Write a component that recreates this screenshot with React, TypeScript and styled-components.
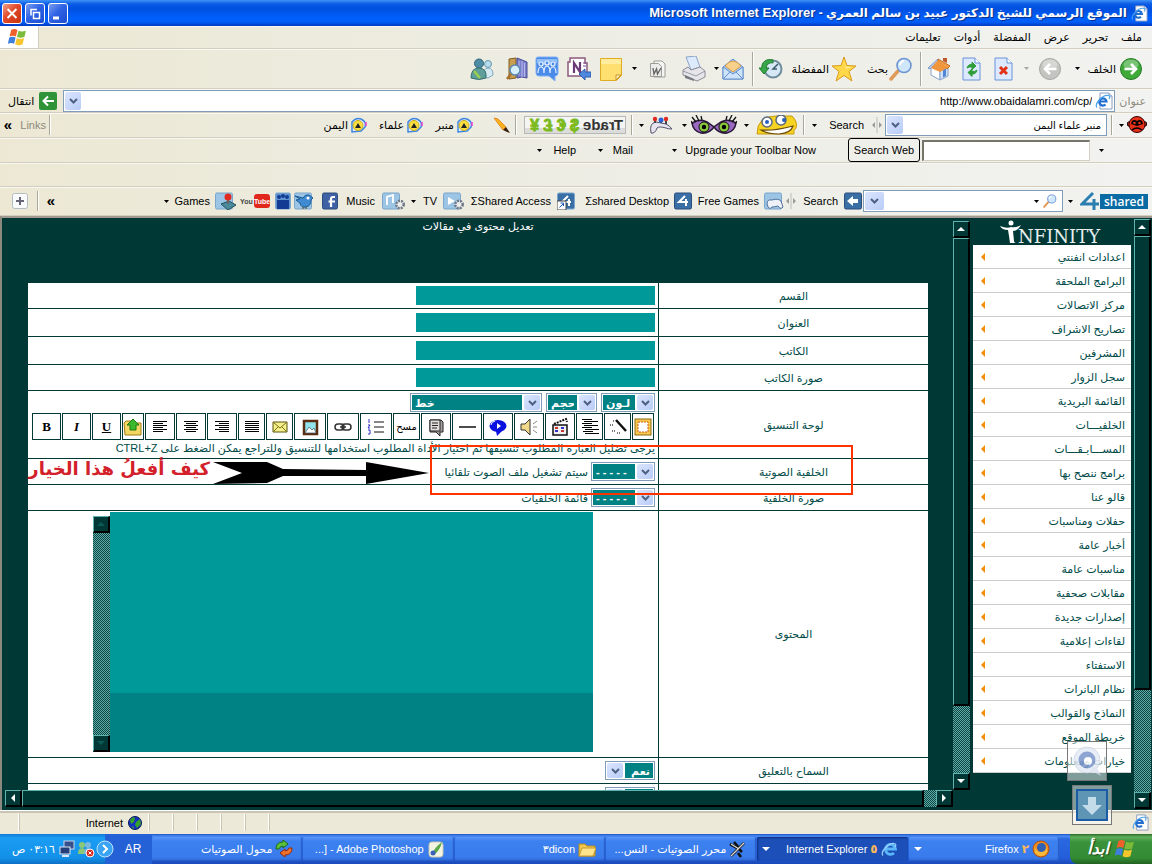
import React from 'react';
import styled, { createGlobalStyle } from 'styled-components';

const dark = '#003836';
const edge = '#5fb3ae';
const ink = '#004a48';

const GlobalStyle = createGlobalStyle`
  * { box-sizing: border-box; }
  body { margin: 0; }
  button, input, select, textarea { font: inherit; margin: 0; padding: 0; border: 0; border-radius: 0; color: inherit; }
  button { background: none; cursor: pointer; }
`;

/* ---------- window chrome ---------- */

const Desktop = styled.div`
  display: flex;
  flex-direction: column;
  height: 100vh;
  overflow: hidden;
  direction: rtl;
  background: #ece9d8;
  color: #000;
  font: 11px/14px "Liberation Sans", "DejaVu Sans", sans-serif;
`;

const TitleBar = styled.header`
  display: flex;
  align-items: center;
  flex: none;
  height: 26px;
  padding: 0 4px 0 2px;
  gap: 4px;
  background: linear-gradient(#3f92f8 0, #0a5be6 4px, #0050e0 9px, #0060fc 18px, #005ef8 22px, #0038c0 26px);
  color: #fff;
`;

const WindowTitle = styled.h1`
  flex: 1;
  margin: 0;
  font-size: 12px;
  line-height: 18px;
  font-weight: bold;
  white-space: nowrap;
  text-shadow: 1px 1px 1px #0a2f86;
`;

const AppName = styled.span`
  font-size: 13px;
`;

const WindowButtons = styled.div`
  display: flex;
  gap: 3px;
`;

const WindowButton = styled.button<{ $close?: boolean }>`
  width: 20px;
  height: 21px;
  border: 1px solid #fff;
  border-radius: 3px;
  background: ${p => (p.$close ? 'linear-gradient(135deg, #f0a088, #e0492a 45%, #c8330f)' : 'linear-gradient(135deg, #7d9ff0, #2f63e4 45%, #1a4cd0)')};
  svg { display: block; }
`;

const Band = styled.div<{ $h: number; $pad: number }>`
  display: flex;
  align-items: center;
  flex: none;
  height: ${p => p.$h}px;
  padding-right: ${p => p.$pad}px;
  border-bottom: 1px solid #d2cfc0;
  box-shadow: inset 0 1px 0 #f8f7f2;
  background: linear-gradient(90deg, #ece8d4, #edede4 50%, #f2f2f0);
  white-space: nowrap;
`;

const Menu = styled.nav`
  display: flex;
  gap: 13px;
`;

const MenuItem = styled.button`
  font-size: 11px;
`;

const Brand = styled.div`
  display: flex;
  align-items: center;
  justify-content: center;
  width: 39px;
  height: 22px;
  margin-right: auto;
  padding-right: 4px;
  background: #fff;
  border-right: 1px solid #d2cfc0;
`;

const Tool = styled.button<{ $w: number; $ms?: number }>`
  flex: none;
  width: ${p => p.$w}px;
  margin-right: ${p => p.$ms ?? 0}px;
  text-align: right;
  white-space: nowrap;
  svg { display: block; }
`;

const Rule = styled.span<{ $ms?: number; $h?: number }>`
  flex: none;
  width: 2px;
  height: ${p => p.$h ?? 20}px;
  margin-right: ${p => p.$ms ?? 0}px;
  border-left: 1px solid #a8a799;
  border-right: 1px solid #fff;
`;

const CaretSlot = styled.span<{ $ms?: number; $faint?: boolean }>`
  flex: none;
  width: 7px;
  margin-right: ${p => p.$ms ?? 0}px;
  opacity: ${p => (p.$faint ? 0.3 : 1)};
  svg { display: block; margin: 0 auto; }
`;

const Spring = styled.span`
  flex: 1;
`;

const Muted = styled.span<{ $size?: number }>`
  color: #8d8a7c;
  font-size: ${p => p.$size ?? 11}px;
`;

const Chevrons = styled.span`
  display: block;
  direction: ltr;
  text-align: center;
  font-size: 15px;
  font-weight: bold;
  line-height: 12px;
`;

const Combo = styled.div<{ $w?: number; $ms?: number; $h?: number }>`
  display: flex;
  align-items: center;
  flex: ${p => (p.$w ? 'none' : '1')};
  width: ${p => (p.$w ? p.$w + 'px' : 'auto')};
  height: ${p => p.$h ?? 22}px;
  margin-right: ${p => p.$ms ?? 0}px;
  padding: 1px;
  gap: 3px;
  border: 1px solid #7f9db9;
  background: #fff;
`;

const ComboInput = styled.input<{ $ltr?: boolean }>`
  flex: 1;
  min-width: 0;
  height: 100%;
  padding: 0 ${p => (p.$ltr ? 0 : 4)}px;
  background: transparent;
  outline: 0;
  direction: ${p => (p.$ltr ? 'ltr' : 'rtl')};
  text-align: right;
  font-size: ${p => (p.$ltr ? 11 : 10)}px;
`;

const DropButton = styled.button<{ $w: number }>`
  display: flex;
  align-items: center;
  justify-content: center;
  flex: none;
  width: ${p => p.$w}px;
  height: 100%;
  border-radius: 2px;
  background: linear-gradient(135deg, #dbe5fd, #b9ccf8);
`;

const GoButton = styled.button`
  display: flex;
  align-items: center;
  gap: 5px;
  margin: 0 6px 0 8px;
`;

const SunkenInput = styled.input`
  width: 168px;
  height: 21px;
  margin-right: 8px;
  border: 1px solid #d4d0c0;
  border-top: 2px solid #77756a;
  border-left: 2px solid #77756a;
  background: #fff;
`;

const SearchWeb = styled.button`
  width: 72px;
  height: 24px;
  margin-right: 2px;
  border: 1px solid #000;
  border-radius: 3px;
  text-align: center;
`;

/* ---------- page frames ---------- */

const Frames = styled.main`
  display: flex;
  flex: 1;
  min-height: 0;
  padding: 1px 1px 1px 0;
  gap: 3px;
  border-top: 2px solid #a09a92;
  border-left: 2px solid #8b8880;
  background: ${dark};
  color: ${ink};
`;

const VBar = styled.div<{ $top?: number }>`
  display: flex;
  flex-direction: column;
  flex: none;
  width: 17px;
  margin-top: ${p => p.$top ?? 0}px;
`;

const HBar = styled.div`
  display: flex;
  flex: none;
  height: 17px;
  padding: 0 17px 0 3px;
`;

const ScrollButton = styled.button`
  display: flex;
  align-items: center;
  justify-content: center;
  flex: none;
  width: 17px;
  height: 17px;
  border: 1px solid #000;
  border-top-color: ${edge};
  border-left-color: ${edge};
  border-right-width: 2px;
  border-bottom-width: 2px;
  background: ${dark};
`;

const Thumb = styled.div<{ $grow: number }>`
  flex: ${p => p.$grow} 1 0;
  border: 1px solid #000;
  border-top-color: ${edge};
  border-left-color: ${edge};
  border-right-width: 2px;
  border-bottom-width: 2px;
  background: ${dark};
`;

const Track = styled.div<{ $grow: number }>`
  flex: ${p => p.$grow} 1 0;
  background: repeating-conic-gradient(#5fa8a4 0 25%, #0b4745 0 50%) 0 0 / 2px 2px;
`;

const Sidebar = styled.aside`
  flex: none;
  width: 158px;
`;

const LogoLink = styled.a`
  display: flex;
  justify-content: center;
  height: 26px;
  svg { display: block; overflow: visible; }
`;

const SideList = styled.ul`
  margin: 0;
  padding: 0;
  list-style: none;
  background: #fff;
`;

const SideLink = styled.a`
  display: flex;
  align-items: center;
  justify-content: space-between;
  height: 24px;
  padding: 0 6px;
  border-bottom: 1px solid #ccc;
  color: ${ink};
  font-size: 11px;
  text-decoration: none;
`;

const MainFrame = styled.section`
  display: flex;
  flex: 1;
  min-width: 0;
  flex-direction: column;
  padding-bottom: 2px;
`;

const MainRow = styled.div`
  display: flex;
  flex: 1;
  min-height: 0;
`;

const Page = styled.div`
  flex: 1;
  min-width: 0;
  overflow: hidden;
  padding: 0 25px 0 26px;
`;

const PageTitle = styled.h2`
  height: 64px;
  margin: 0;
  color: #fff;
  text-align: center;
  font-size: 11px;
  font-weight: normal;
`;

const Sheet = styled.div`
  position: relative;
`;

const FormTable = styled.table`
  width: 100%;
  border-spacing: 0;
  background: #fff;
`;

const LabelCell = styled.th<{ $h: number }>`
  width: 270px;
  height: ${p => p.$h}px;
  padding: 0;
  border-left: 1px solid ${dark};
  border-bottom: 1px solid ${dark};
  font-size: 11px;
  font-weight: normal;
  text-align: center;
`;

const FieldCell = styled.td`
  padding: 0 3px;
  border-bottom: 1px solid ${dark};
  white-space: nowrap;
`;

const FieldInput = styled.input`
  display: block;
  width: 239px;
  height: 19px;
  background: #099;
`;

const Inline = styled.div`
  display: flex;
  align-items: center;
  gap: 3px;
`;

const SelectBox = styled.span<{ $w: number; $start?: boolean }>`
  display: flex;
  flex: none;
  flex-direction: ${p => (p.$start ? 'row' : 'row-reverse')};
  width: ${p => p.$w}px;
  height: 19px;
  padding: 1px;
  gap: 2px;
  border: 1px solid #7f9db9;
  background: #fff;
  direction: rtl;
`;

const Pickers = styled(Inline)`
  gap: 4px;
`;

const TealSelect = styled.select`
  flex: 1;
  min-width: 0;
  padding: 0 3px;
  appearance: none;
  border: 0;
  background: #008284;
  color: #fff;
  font-size: 11px;
  font-weight: bold;
  outline: 0;
`;

const EditorBar = styled.div`
  display: flex;
  direction: ltr;
  justify-content: flex-end;
  gap: 1px;
  margin-top: 1px;
  padding-right: 1px;
`;

const EditorButton = styled.button<{ $w: number }>`
  display: flex;
  align-items: center;
  justify-content: center;
  flex: none;
  width: ${p => p.$w}px;
  height: 27px;
  border: 1px solid ${dark};
  background: #fff;
  color: #000;
  font-size: 10px;
  overflow: hidden;
`;

const Letter = styled.span<{ $italic?: boolean; $under?: boolean }>`
  font: bold 13px/16px "Liberation Serif", serif;
  font-style: ${p => (p.$italic ? 'italic' : 'normal')};
  text-decoration: ${p => (p.$under ? 'underline' : 'none')};
`;

const Hint = styled.p`
  margin: 0;
  font-size: 11px;
  line-height: 16px;
`;

const EditorArea = styled.div`
  display: flex;
  align-items: flex-end;
  justify-content: center;
  height: 240px;
  margin-bottom: 4px;
`;

const Content = styled.textarea`
  width: 483px;
  height: 240px;
  resize: none;
  outline: 0;
  background: linear-gradient(#099 181px, #008284 181px);
`;

const EditorScroll = styled.div`
  display: flex;
  flex-direction: column;
  width: 17px;
  height: 236px;
`;

const Callout = styled.div`
  position: absolute;
  top: 162px;
  right: 75px;
  width: 423px;
  height: 50px;
  border: 2px solid #ff3300;
`;

const Annotation = styled.div`
  position: absolute;
  top: 178px;
  right: 499px;
  display: flex;
  align-items: flex-start;
  gap: 3px;
  direction: ltr;
  color: #d3202a;
  font: bold 18px/16px "DejaVu Sans", sans-serif;
  white-space: nowrap;
`;

const Gadget = styled.button<{ $top: number; $right: number }>`
  position: fixed;
  top: ${p => p.$top}px;
  right: ${p => p.$right}px;
  width: 40px;
  height: 40px;
  border: 1px solid #777;
  background: rgba(255, 255, 255, 0.5);
  svg { display: block; }
`;

/* ---------- status and task bars ---------- */

const StatusBar = styled.footer`
  display: flex;
  align-items: center;
  flex: none;
  height: 24px;
  padding-right: 3px;
  border-top: 1px solid #fff;
  box-shadow: inset 0 2px 0 #c9c4b4;
  background: #ece9d8;
`;

const StatusCell = styled.span<{ $w: number }>`
  display: flex;
  align-items: center;
  justify-content: flex-start;
  gap: 5px;
  flex: none;
  width: ${p => p.$w}px;
  height: 17px;
  padding-right: 6px;
  border-right: 1px solid #fff;
  box-shadow: 1px 0 0 #c9c5b4;
`;

const TaskBar = styled.footer`
  display: flex;
  flex: none;
  height: 30px;
  background: linear-gradient(#1a4fc0 0, #4a8cf4 2px, #2a68e0 5px, #245edb 24px, #1a48b8);
  color: #fff;
`;

const StartButton = styled.button`
  display: flex;
  align-items: center;
  justify-content: center;
  gap: 6px;
  width: 82px;
  border-radius: 0 0 0 8px;
  background: linear-gradient(#2a6b28 0, #5fae5c 3px, #3a923a 8px, #338c33 24px, #226022);
  font: italic bold 16px/22px "DejaVu Sans", sans-serif;
  text-shadow: 1px 1px 1px #1b4a1b;
`;

const Tasks = styled.div`
  display: flex;
  flex: 1;
  min-width: 0;
  gap: 1px;
  padding: 3px 11px 3px 0;
`;

const Task = styled.button<{ $active?: boolean }>`
  display: flex;
  align-items: center;
  flex: 1 1 0;
  min-width: 0;
  gap: 3px;
  padding: 0 9px 0 5px;
  border-radius: 2px;
  background: ${p => (p.$active ? '#1c4fb8' : 'linear-gradient(#5c96f8, #3c81f0 4px, #3a7bec 20px, #2f6bd8)')};
  box-shadow: ${p => (p.$active ? 'inset 1px 1px 2px #0d2f80' : 'inset -1px -1px 1px #2a5cc4')};
  color: #fff;
  white-space: nowrap;
  font-size: 12px;
  svg { flex: none; }
`;

const TaskText = styled.span<{ $ltr?: boolean; $size?: number }>`
  direction: ${p => (p.$ltr ? 'ltr' : 'rtl')};
  font-size: ${p => p.$size ?? 12}px;
`;

const Count = styled.b`
  color: #ffb95a;
`;

const Language = styled.div`
  display: flex;
  align-items: center;
  justify-content: center;
  width: 38px;
  background: #2460d6;
  font-size: 12px;
`;

const Tray = styled.div`
  display: flex;
  align-items: center;
  gap: 1px;
  width: 114px;
  background: linear-gradient(270deg, #2460d6 9px, transparent 9px), linear-gradient(#0f7ad8, #1b9df4 4px, #1290e8 24px, #0d6fc4);
`;

const Clock = styled.time`
  margin-right: 2px;
  font-size: 11px;
  white-space: nowrap;
`;

/* ---------- drawings ---------- */

const Caret = ({ ms, faint }: { ms?: number; faint?: boolean }) => (
  <CaretSlot $ms={ms} $faint={faint}><svg width="5" height="3"><path d="M0 0h5L2.500 3z" /></svg></CaretSlot>
);

const Chevron = () => (
  <svg width="9" height="6"><path d="M1 1l3.500 3.500L8 1" fill="none" stroke="#4d6185" strokeWidth="2" /></svg>
);

const Tri = ({ dir, color = '#fff' }: { dir: 'up' | 'down' | 'left' | 'right'; color?: string }) => {
  const d = { up: 'M0 6h8L4 2z', down: 'M0 2h8L4 6z', left: 'M6 0v8L2 4z', right: 'M2 0v8l4-4z' }[dir];
  return <svg width="8" height="8"><path d={d} fill={color} /></svg>;
};

const Flag = ({ size = 18 }: { size?: number }) => (
  <svg width={size} height={size} viewBox="0 0 18 18">
    <path d="M3 2q3-2 6 0l-1.500 6q-3-1.500-6 0z" fill="#f0602a" />
    <path d="M10 2.500q3 1.500 7 0L15.500 8.500q-3.500 1.500-7 0z" fill="#7cba3a" />
    <path d="M1.200 9q3-1.500 6 0L5.800 15q-3-1.800-6 0z" fill="#3f7fdc" />
    <path d="M8.300 9.500q3.500 1.600 7 0L13.800 15.500q-3.500 2-7 0z" fill="#f6c62c" />
  </svg>
);

const Explorer = ({ size = 18, page = true }: { size?: number; page?: boolean }) => (
  <svg width={size} height={size} viewBox="0 0 18 18">
    {page && <path d="M5 1h9l3 3v13H5z" fill="#fff" stroke="#8a9cc0" />}
    {page && <path d="M14 1v3h3" fill="#dce8fa" stroke="#8a9cc0" />}
    <path d={page ? 'M10.500 12.500a3.600 3.600 0 1 1 1-3H4.500' : 'M13 13a5 5 0 1 1 1.500-4H5'} fill="none" stroke={page ? '#1f6ed0' : '#5cb6fa'} strokeWidth={page ? 2.200 : 2.800} />
    <path d="M2 15.500C-1 12 7 3 13 3.500q3 .5 1 3.500" fill="none" stroke={page ? '#4aa4ec' : '#9ad2ff'} strokeWidth="1.200" />
  </svg>
);

const Round = ({ green }: { green?: boolean }) => (
  <svg width="24" height="24" viewBox="0 0 24 24">
    <circle cx="12" cy="12" r="10.500" fill={green ? '#3fa93a' : '#c4c4c0'} stroke={green ? '#237a22' : '#a6a6a2'} />
    <ellipse cx="12" cy="7.500" rx="7.500" ry="5" fill="#fff" opacity=".3" />
    <path d={green ? 'M5.500 12h11M12 7l5 5-5 5' : 'M18.500 12h-11M12 7l-5 5 5 5'} fill="none" stroke="#fff" strokeWidth="2.600" />
  </svg>
);

const Doc = ({ kind }: { kind: 'stop' | 'refresh' }) => (
  <svg width="20" height="24" viewBox="0 0 20 24">
    <path d="M1 1h12l5 5v17H1z" fill="#dce9ff" stroke="#6a94d8" />
    <path d="M13 1v5h5" fill="#fff" stroke="#6a94d8" />
    {kind === 'stop'
      ? <path d="M6 10l7 7M13 10l-7 7" stroke="#e23218" strokeWidth="3" />
      : <path d="M5 11q1-4 5-3.500V5l4 4-4 3.500V10q-3-.5-5 1zM15 13q-1 4.500-5 4v2.500l-4-4 4-3.500V14.500q3 .5 5-1.500z" fill="#2f9e38" stroke="#2f9e38" />}
  </svg>
);

const Home = () => (
  <svg width="24" height="24" viewBox="0 0 24 24">
    <path d="M4 9l9 5v9l-9-5z" fill="#fff" stroke="#8aa4cc" />
    <path d="M13 14l8-5v10l-8 4z" fill="#cfe0f8" stroke="#8aa4cc" />
    <path d="M16 13l3-2v8l-3 1.500z" fill="#4f86d8" />
    <path d="M11 2L1 11l2 1 8-8z" fill="#b8d0f2" stroke="#7c98c8" />
    <path d="M11 2l12 7-3 3-8-7z" fill="#f2a04a" stroke="#c66c1a" />
    <path d="M11 3l9 8-7 4-9-4z" fill="#f0963c" />
    <path d="M16 1h4v5l-4-2z" fill="#c0572a" />
  </svg>
);

const Lens = ({ size = 24 }: { size?: number }) => (
  <svg width={size} height={size} viewBox="0 0 24 24">
    <path d="M2 22l7-8" stroke="#e09a58" strokeWidth="3.500" strokeLinecap="round" />
    <circle cx="15" cy="8.500" r="7" fill="#cfe6fb" stroke="#6d95d4" strokeWidth="1.600" />
    <path d="M11 8a4 4 0 0 1 4-4" stroke="#fff" strokeWidth="2" fill="none" />
  </svg>
);

const Star = () => (
  <svg width="26" height="26" viewBox="0 0 26 26">
    <path d="M13 1l3 8.500 9 .5-7 5.500L21 25l-8-5.500L5 25l3-9.500L1 10l9-.5z" fill="#ffd84a" stroke="#d89a1c" />
    <path d="M13 4l2 7 6 .5-6 1z" fill="#fff3b0" />
  </svg>
);

const HistoryIcon = () => (
  <svg width="24" height="24" viewBox="0 0 24 24">
    <circle cx="14" cy="12" r="8.500" fill="#d6e8f6" stroke="#6f8c9c" strokeWidth="2" />
    <path d="M19 7l-5 5h4" fill="none" stroke="#3d5a6c" strokeWidth="1.500" />
    <path d="M14 3C7 1 2 6 3 11H0l5 6 5-6H7.500C7 8 10 5 14 6z" fill="#3aa64a" stroke="#1e7a30" />
  </svg>
);

const MailIcon = () => (
  <svg width="22" height="24" viewBox="0 0 22 24">
    <path d="M1 10L11 2l10 8v12H1z" fill="#a9cdf5" stroke="#5f8fcb" />
    <path d="M3 9q8-10 16 0l-8 6z" fill="#f9d08a" stroke="#d89a4a" />
    <path d="M1 10l10 7 10-7v12H1z" fill="#cfe4fc" stroke="#5f8fcb" />
    <path d="M1 22l7-7M21 22l-7-7" stroke="#5f8fcb" />
  </svg>
);

const Printer = () => (
  <svg width="24" height="26" viewBox="0 0 24 26">
    <path d="M4 1l10-1 4 11-9 3z" fill="#dceafc" stroke="#8ba4c8" />
    <path d="M1 14l5-3 3 3 9-3 5 4v6l-8 4-14-6z" fill="#e6e6ea" stroke="#8a8a94" />
    <path d="M1 15l13 5 9-5" fill="none" stroke="#9a9aa6" />
    <path d="M3 19l9 4v2l-9-3z" fill="#77777f" />
  </svg>
);

const WordDoc = () => (
  <svg width="16" height="18" viewBox="0 0 16 18">
    <path d="M4 1h8l3 3v13H4z" fill="#f5f5f3" stroke="#9c9c98" />
    <path d="M.500 3.500h8l3 3v10h-11z" fill="#ececea" stroke="#9c9c98" />
    <path d="M3 8l1 6 2.500-5 1 5L11 8" fill="none" stroke="#666" strokeWidth="1.400" />
  </svg>
);

const Note = () => (
  <svg width="22" height="24" viewBox="0 0 22 24">
    <path d="M.500 1.500h21v17l-5 5h-16z" fill="#ffdf70" stroke="#e0ac24" />
    <path d="M1 2h20v5H1z" fill="#ffec9c" />
    <path d="M21 18h-5v5z" fill="#fff3bd" stroke="#c8922a" />
  </svg>
);

const OneNote = () => (
  <svg width="24" height="24" viewBox="0 0 24 24">
    <path d="M3 1h15v5h2v13H1V5h2z" fill="#fff" stroke="#8a5a7c" strokeWidth="1.500" />
    <path d="M7 16V6l6 9V5" fill="none" stroke="#6b3b76" strokeWidth="2.200" />
    <path d="M16 6h3M16 9h3" stroke="#7b4b96" />
    <path d="M12 17l6-5v3h6v5h-6v3z" fill="#4f88dc" stroke="#2b5eae" />
  </svg>
);

const ChatIcon = () => (
  <svg width="24" height="26" viewBox="0 0 24 26">
    <path d="M3 1h18q2 0 2 2v14q0 3-3 3v5l-6-5H4q-3 0-3-3V3q0-2 2-2z" fill="#4a8ae8" stroke="#7fb0f4" />
    <path d="M2 3h20v4q-10 4-20 0z" fill="#8fbef8" />
    <g fill="#4a8ae8" stroke="#eaf3ff" strokeWidth="1.200">
      <circle cx="6" cy="8" r="2" /><circle cx="12" cy="7" r="2" /><circle cx="18" cy="8" r="2" />
      <path d="M3 17q0-6 3-6t3 6M9 17q0-7 3-7t3 7M15 17q0-6 3-6t3 6" />
    </g>
  </svg>
);

const Research = () => (
  <svg width="22" height="24" viewBox="0 0 22 24">
    <path d="M3 2l7-1v20l-7 1z" fill="#c8a050" stroke="#7c5c24" />
    <path d="M11 1l5 2 5 2v16l-5-1-5 1z" fill="#7c80cc" stroke="#464a94" />
    <path d="M13 4v14M16 4v16M18.500 6v14" stroke="#b6b9ee" />
    <circle cx="9" cy="13" r="5" fill="#d6effc" stroke="#5a8ab4" strokeWidth="1.500" />
    <path d="M5 17l-4 5" stroke="#a8702a" strokeWidth="2.500" />
  </svg>
);

const People = () => (
  <svg width="24" height="24" viewBox="0 0 24 24">
    <circle cx="18" cy="7" r="3.500" fill="#b8dcea" stroke="#5f96b4" />
    <path d="M13 20q0-9 5-9t5 7l-5 3z" fill="#d6eaf2" stroke="#7aa8c0" />
    <circle cx="9" cy="6.500" r="4.500" fill="#4e8ca6" stroke="#2f6478" />
    <path d="M1 21q0-10 8-10t7 10q-7 3-15 0z" fill="#5f9e9a" stroke="#35706e" />
    <path d="M4 14l6 7" fill="none" stroke="#9ad04a" strokeWidth="2.500" />
  </svg>
);

const Monkey = () => (
  <svg width="20" height="20" viewBox="0 0 20 20">
    <circle cx="2.500" cy="9" r="2.300" fill="#e02a10" stroke="#000" /><circle cx="17.500" cy="9" r="2.300" fill="#e02a10" stroke="#000" />
    <circle cx="10" cy="9.500" r="8" fill="#e83018" stroke="#300" />
    <path d="M4 9q1-6 6-3 5-3 6 3l-6 2z" fill="#000" />
    <circle cx="7.500" cy="8" r="1.300" fill="#e83018" /><circle cx="12.500" cy="8" r="1.300" fill="#e83018" />
    <path d="M5 15q5-4 10 0" fill="none" stroke="#000" strokeWidth="1.500" />
  </svg>
);

const Smiley = () => (
  <svg width="42" height="20" viewBox="0 0 42 20">
    <path d="M1 19Q1 1 20 1h16q6 6 4 12-3 2-2 6z" fill="#f8d422" stroke="#c89a10" />
    <circle cx="11" cy="7" r="5" fill="#fff" stroke="#5b6a80" strokeWidth="1.500" /><circle cx="25" cy="5" r="5" fill="#fff" stroke="#5b6a80" strokeWidth="1.500" />
    <circle cx="11" cy="7" r="2" fill="#2a60b8" /><circle cx="28" cy="5" r="2" fill="#2a60b8" />
    <path d="M5 15q14 1 32-4-2 7-14 8-12 0-18-4z" fill="#fff" stroke="#6a4a08" strokeWidth="1.200" />
  </svg>
);

const Eyes = () => (
  <svg width="46" height="20" viewBox="0 0 46 20">
    {[0, 23].map((x, i) => (
      <g key={x} transform={i ? 'translate(46 0) scale(-1 1)' : undefined}>
        <path d="M1 8q8-5 15-1l7 5q-5 7-13 6Q2 16 1 8z" fill="#9a6ac0" stroke="#2a1838" strokeWidth="1.500" />
        <circle cx="13" cy="12" r="5" fill="#8ac83c" stroke="#111" /><circle cx="13" cy="12" r="2.200" />
        <path d="M5 7L1 2M8 6L5 0M11 5l-1-4M2 9L0 6" stroke="#111" strokeWidth="1.300" />
      </g>
    ))}
  </svg>
);

const Gauntlet = () => (
  <svg width="24" height="20" viewBox="0 0 24 20">
    <path d="M2 18Q0 8 7 7l10 2q4 2 6 5-4 0-6-1-7-2-9 0-2 6-6 5z" fill="#e6e4ee" stroke="#55506c" />
    <path d="M6 4v4M12 3v5M17 4v5" stroke="#445" strokeWidth="2" />
    <circle cx="6" cy="4" r="2.200" fill="#e02a20" /><circle cx="17" cy="4" r="2.200" fill="#e02a20" /><circle cx="12" cy="5" r="2.500" fill="#2a62d8" />
  </svg>
);

const TradeBanner = () => (
  <svg width="102" height="20" viewBox="0 0 102 20" direction="ltr">
    <rect x=".5" y="1.500" width="101" height="17" fill="#f4f4f2" stroke="#b8b8b8" />
    <path d="M1 13h100v5H1z" fill="#dcdcda" />
    <g transform="translate(102 0) scale(-1 1)" fontFamily="Liberation Sans, sans-serif" fontWeight="bold">
      <text x="3" y="15" fontSize="15" fill="#333">Trade</text>
      <text x="47" y="16" fontSize="16" fill="#7cba1e" stroke="#7cba1e">$ € £ ¥</text>
    </g>
  </svg>
);

const Pencil = () => (
  <svg width="18" height="18" viewBox="0 0 18 18">
    <path d="M1 2l4 1 8 8-3 3z" fill="#f8b41c" stroke="#e88a20" /><path d="M10 14l3-3 4 6-3-1z" fill="#3a2210" />
  </svg>
);

const Finder = () => (
  <svg width="18" height="18" viewBox="0 0 18 18">
    <path d="M2 16V6q4-5 9-3 6 3 4 8l-4 4z" fill="#e4f0fc" stroke="#3f86e0" strokeWidth="1.500" />
    <circle cx="8" cy="9.500" r="5" fill="#fbe040" stroke="#c8a820" />
    <path d="M5 12l3-5 3 5z" fill="#222" /><path d="M16 6v4" stroke="#f040d0" strokeWidth="1.500" />
  </svg>
);

const Splitter = () => (
  <svg width="10" height="16" viewBox="0 0 10 16"><path d="M3 5v6L0 8zM7 5v6l3-3z" fill="#999" /><path d="M5 0v16" stroke="#bbb" /></svg>
);

const FourLogo = () => (
  <svg width="68" height="20" viewBox="0 0 68 20" direction="ltr">
    <path d="M13 2L2 13h17M14 8v11" fill="none" stroke="#2a7fb0" strokeWidth="3" />
    <rect x="20" y="3" width="48" height="15" fill="#0a6ba4" />
    <text x="44" y="14.500" textAnchor="middle" fontFamily="Open Sans, sans-serif" fontSize="12" fontWeight="600" fill="#fff">shared</text>
  </svg>
);

type TileKind = 'games' | 'four' | 'access' | 'tv' | 'music' | 'face' | 'bird' | 'crowd' | 'stick' | 'back';
const Tile = ({ kind, w = 18 }: { kind: TileKind; w?: number }) => (
  <svg width={w} height="18" viewBox={`0 0 ${w} 18`}>
    <rect x="0.500" y="1" width={kind === 'face' || kind === 'crowd' ? 15 : 17} height="16" rx="1.500"
      fill={kind === 'face' ? '#3f62a4' : kind === 'crowd' ? '#5f94d0' : kind === 'four' || kind === 'access' || kind === 'back' ? '#3a6fa6' : '#9cc4e4'}
      stroke={kind === 'face' || kind === 'four' || kind === 'back' ? '#2a4d7c' : '#7aa6cc'} />
    {kind === 'back' && <path d="M3 9l6-5v3h5v4H9v3z" fill="#fff" />}
    {(kind === 'four' || kind === 'access') && <path d="M11 4l-6 6h9M12 7v7" stroke="#fff" strokeWidth="2" fill="none" />}
    {kind === 'access' && <g><rect x="0" y="9" width="9" height="9" fill="#fff" stroke="#444" /><path d="M2.500 15.500l4-4M3.500 11h3v3" stroke="#1a56b0" fill="none" /></g>}
    {kind === 'face' && <path d="M13 5h-2q-2 0-2 2v8M6.500 9.500H13" stroke="#fff" strokeWidth="2.200" fill="none" />}
    {kind === 'crowd' && <g fill="#123c94"><circle cx="4" cy="5" r="2" /><circle cx="8" cy="4" r="2" /><circle cx="12" cy="5" r="2" /><path d="M2 8h12v9H2z" /></g>}
    {kind === 'tv' && <path d="M5 5v8l7-4z" fill="#fff" />}
    {kind === 'music' && <path d="M5 13V5l6-2v8" fill="none" stroke="#fff" strokeWidth="1.800" />}
    {(kind === 'tv' || kind === 'music') && <circle cx={w - 6} cy="12.500" r="3.700" fill="#eee" stroke="#6e7884" strokeWidth="2.500" strokeDasharray="2 1" />}
    {kind === 'games' && <path d="M3 12q0-5 5-4 6-2 9 1l2 6q-2 3-5-1-4 1-6 1-3 4-5-3z" fill="#eef2f8" stroke="#50709a" />}
    {kind === 'bird' && <g><path d="M1 4l5 3-4 1 4 3q1 5 6 4 5-1 5-7l2-2-4-3q-4-1-6 3z" fill="#3f8ad0" stroke="#1c5c94" /><circle cx="14" cy="6" r="1.500" fill="#fff" /><path d="M9 15v2M12 15v2" stroke="#6a4a20" /></g>}
    {kind === 'stick' && <g><path d="M6 12l8-3 7 4-8 5z" fill="#4a8a9a" stroke="#22525e" /><path d="M13 12V6" stroke="#666" strokeWidth="2" /><circle cx="13" cy="5" r="3.500" fill="#e02a20" /></g>}
  </svg>
);

const YouTube = () => (
  <svg width="30" height="18" viewBox="0 0 30 18" direction="ltr" fontFamily="Liberation Sans Narrow, Liberation Sans, sans-serif" fontWeight="bold">
    <text x="0" y="12" fontSize="7" fill="#444">You</text>
    <rect x="14" y="2" width="16" height="14" rx="3" fill="#e0281c" />
    <text x="22" y="12" fontSize="7" fill="#fff" textAnchor="middle">Tube</text>
  </svg>
);

const InfinityLogo = () => (
  <svg width="110" height="26" viewBox="0 0 110 26" direction="ltr">
    <circle cx="14" cy="4" r="2.500" fill="#fff" />
    <path d="M3 7q7 3 11 1 6 1 10-2-3 6-8 6l1 10q0 2 3 2h-7l-1-7-1-6Q5 11 3 7z" fill="#fff" />
    <text x="21" y="24" fontFamily="DejaVu Serif, serif" fontSize="18" fill="#e8efee">NFINITY</text>
  </svg>
);

const Lines = ({ kind }: { kind: 'left' | 'center' | 'right' | 'full' | 'para' }) => (
  <svg width="18" height="16" shapeRendering="crispEdges">
    {(kind === 'para' ? [0, 1, 2, 3, 4, 5, 6, 7] : [1, 2, 3, 4, 5, 6]).map(i => {
      const w = kind === 'full' ? 14 : i % 2 ? 14 : 10;
      const x = kind === 'left' ? 2 : kind === 'center' ? (18 - w) / 2 : kind === 'para' ? (i % 2 ? 3 : 1) + (i > 4 ? 1 : 0) : 16 - w;
      return <rect key={i} x={x} y={i * 2} width={w} height="1" />;
    })}
  </svg>
);

const Art = ({ kind }: { kind: string }) => (
  <svg width="20" height="20" viewBox="0 0 20 20">
    {kind === 'folder' && <g><path d="M1 6l2-2h5l1 2h9v12H2z" fill="#f4d662" stroke="#a07c14" /><path d="M10 2l6 6h-3v5H7V8H4z" fill="#3cb82c" stroke="#1c7a14" /></g>}
    {kind === 'mail' && <g><path d="M3 5h14v10H3z" fill="#f6f08a" stroke="#55500a" /><path d="M3 5l7 6 7-6M3 15l5-5M17 15l-5-5" fill="none" stroke="#77701a" /></g>}
    {kind === 'image' && <g><path d="M4 4h13v13H4z" fill="#90e4ec" stroke="#5a2c10" strokeWidth="2.500" /><path d="M5 16l4-6 3 3 2-2 2 5z" fill="#fff" stroke="#456" strokeWidth=".7" /></g>}
    {kind === 'link' && <g fill="none" stroke="#333" strokeWidth="1.500"><rect x="2" y="7" width="9" height="6" rx="3" /><rect x="9" y="7" width="9" height="6" rx="3" /><path d="M7 10h6" /></g>}
    {kind === 'list' && <g><path d="M8 5h10M8 10h10M8 15h10" stroke="#111" /><path d="M3 2v4M2 8h2l-2 3h2M2 13h2v4H2" fill="none" stroke="#2a2ac8" /></g>}
    {kind === 'comment' && <g><path d="M4 3h11l2 2v10h-3v4l-4-4H4z" fill="#a8a0a0" stroke="#222" /><path d="M4 3h10v11H4z" fill="#e2dcdc" stroke="#222" /><path d="M6 6h6M6 8.500h6M6 11h5" stroke="#222" /></g>}
    {kind === 'rule' && <path d="M2 10h17" stroke="#111" strokeWidth="1.500" />}
    {kind === 'media' && <g><ellipse cx="10" cy="9" rx="8.500" ry="6" fill="#0a10e0" /><path d="M8 14h6l-5 5z" fill="#0a10e0" /><path d="M9 6v6l4-3z" fill="#fff" /><path d="M3 8q0-3 4-4" stroke="#fff" fill="none" /></g>}
    {kind === 'sound' && <g><path d="M2 7h4l5-5v16l-5-5H2z" fill="#f2d88a" stroke="#333" /><path d="M14 7l4-3M14 10h4M14 13l4 3" stroke="#888" /></g>}
    {kind === 'movie' && <g><path d="M3 8h14v10H3z" fill="#f0f0f0" stroke="#111" strokeWidth="1.500" /><path d="M4 7l12-5 1 3" fill="none" stroke="#111" strokeWidth="2" strokeDasharray="2 1" /><path d="M5 11h3M11 14h3" stroke="#c33" strokeWidth="2" /><path d="M5 14h3M11 11h3" stroke="#33c" strokeWidth="2" /></g>}
    {kind === 'wand' && <g><path d="M8 3l10 11" stroke="#111" strokeWidth="2.500" /><path d="M2 8h3M4 14h3M9 16h3M5 4h2" stroke="#777" strokeWidth="2" strokeDasharray="1 1" /></g>}
    {kind === 'frame' && <g><rect x="2" y="2" width="16" height="16" fill="#f6c850" stroke="#8a6a10" /><rect x="5" y="5" width="10" height="10" fill="#fff" stroke="#d05a10" strokeDasharray="2 1" /></g>}
  </svg>
);

const Globe = () => (
  <svg width="14" height="14" viewBox="0 0 14 14">
    <circle cx="7" cy="7" r="6.500" fill="#1430c0" stroke="#0a1a50" />
    <path d="M2 4q3-4 5-2l-1 4-3 2zM8 6l4-3 1 5-4 4-2-3zM3 10l3 1v2z" fill="#36a02c" />
  </svg>
);

const TaskArt = ({ kind }: { kind: string }) => (
  <svg width="18" height="18" viewBox="0 0 18 18">
    {kind === 'fox' && <g><circle cx="9" cy="9" r="8" fill="#f08a1c" stroke="#b4500c" /><circle cx="9.500" cy="7.500" r="4.500" fill="#2f62b4" /><path d="M2 5q2 8 8 7 5-1 4-6 3 5-1 9-6 3-10-2z" fill="#f8b83a" /></g>}
    {kind === 'tools' && <path d="M2 16L15 3M1 4l9 5 3 3M5 2l6 7M9 13l3 4" stroke="#111" strokeWidth="2.600" fill="none" />}
    {kind === 'tools' && <path d="M2 16L15 3M2 4l8 5" stroke="#ddd" strokeWidth="1.200" />}
    {kind === 'folder' && <g><path d="M1 4h6l2 2h8v10H1z" fill="#f2c850" stroke="#b48a1c" /><path d="M4 8h14l-3 8H1z" fill="#fde48c" stroke="#c89a28" /></g>}
    {kind === 'brush' && <g><rect x="2" y="2" width="14" height="15" rx="3" fill="#f4f4e4" stroke="#c8c8b0" /><path d="M5 14q3-7 10-12-2 8-7 12z" fill="#5aa848" /><circle cx="6" cy="13" r="2.500" fill="#3a62b8" /></g>}
    {kind === 'swap' && <g><path d="M1 9q0-7 7-7V0l5 4-5 4V6q-3 0-4 3z" fill="#5ac03c" stroke="#1f6a14" /><path d="M17 8q0 7-7 7v2l-5-4 5-4v2q3 0 4-3z" fill="#f0702c" stroke="#94300c" /></g>}
    {kind === 'net' && <g><rect x="6" y="1" width="10" height="8" fill="#34508c" stroke="#c8d4e8" /><rect x="2" y="7" width="10" height="7" fill="#26407c" stroke="#dde6f4" /><path d="M4 16h7" stroke="#dde6f4" strokeWidth="2" /></g>}
    {kind === 'buddies' && <g><circle cx="5" cy="5" r="3" fill="#8ac878" /><path d="M1 14q0-6 4-6t4 6z" fill="#8ac878" /><circle cx="11" cy="5" r="3" fill="#7ab8e0" /><path d="M7 14q0-6 4-6t4 6z" fill="#7ab8e0" /><circle cx="13" cy="13" r="4" fill="#d8281c" stroke="#fff" /><path d="M11.500 11.500l3 3M14.500 11.500l-3 3" stroke="#fff" /></g>}
  </svg>
);

/* ---------- data ---------- */

const menu = ['ملف', 'تحرير', 'عرض', 'المفضلة', 'أدوات', 'تعليمات'];

const sections = [
  'اعدادات انفنتي', 'البرامج الملحقة', 'مركز الاتصالات', 'تصاريح الاشراف', 'المشرفين', 'سجل الزوار',
  'القائمة البريدية', 'الخلفيـــات', 'المســـابـقـــات', 'برامج ننصح بها', 'قالو عنا', 'حفلات ومناسبات',
  'أخبار عامة', 'مناسبات عامة', 'مقابلات صحفية', 'إصدارات جديدة', 'لقاءات إعلامية', 'الاستفتاء',
  'نظام البانرات', 'النماذج والقوالب', 'خريطة الموقع', 'خيارات ومعلومات',
];

const editorTools: { name: string; w: number; art: React.ReactNode }[] = [
  { name: 'Bold', w: 29, art: <Letter>B</Letter> },
  { name: 'Italic', w: 29, art: <Letter $italic>I</Letter> },
  { name: 'Underline', w: 29, art: <Letter $under>U</Letter> },
  { name: 'Upload', w: 22, art: <Art kind="folder" /> },
  { name: 'Align left', w: 30, art: <Lines kind="left" /> },
  { name: 'Align center', w: 30, art: <Lines kind="center" /> },
  { name: 'Align right', w: 30, art: <Lines kind="right" /> },
  { name: 'Justify', w: 27, art: <Lines kind="full" /> },
  { name: 'Mail', w: 27, art: <Art kind="mail" /> },
  { name: 'Image', w: 32, art: <Art kind="image" /> },
  { name: 'Link', w: 32, art: <Art kind="link" /> },
  { name: 'List', w: 32, art: <Art kind="list" /> },
  { name: 'Clear', w: 27, art: 'مسح' },
  { name: 'Comment', w: 30, art: <Art kind="comment" /> },
  { name: 'Rule', w: 30, art: <Art kind="rule" /> },
  { name: 'Media', w: 30, art: <Art kind="media" /> },
  { name: 'Sound', w: 30, art: <Art kind="sound" /> },
  { name: 'Movie', w: 30, art: <Art kind="movie" /> },
  { name: 'Paragraph', w: 27, art: <Lines kind="para" /> },
  { name: 'Effects', w: 27, art: <Art kind="wand" /> },
  { name: 'Frame', w: 22, art: <Art kind="frame" /> },
];

const Picker = ({ w, text, id, start, label }: { w: number; text: string; id?: string; start?: boolean; label?: string }) => (
  <SelectBox $w={w} $start={start}>
    <TealSelect id={id} aria-label={label} dir={start ? 'rtl' : 'ltr'}><option>{text}</option></TealSelect>
    <DropButton $w={16} tabIndex={-1} aria-hidden><Chevron /></DropButton>
  </SelectBox>
);

const Row = ({ id, label, h, children }: { id: string; label: string; h: number; children: React.ReactNode }) => (
  <tr>
    <LabelCell scope="row" $h={h}><label htmlFor={id}>{label}</label></LabelCell>
    <FieldCell>{children}</FieldCell>
  </tr>
);

export default function App() {
  return (
    <Desktop>
      <GlobalStyle />
      <TitleBar>
        <Explorer size={17} />
        <WindowTitle>الموقع الرسمي للشيخ الدكتور عبيد بن سالم العمري - <AppName>Microsoft Internet Explorer</AppName></WindowTitle>
        <WindowButtons>
          <WindowButton aria-label="Minimize"><svg width="18" height="19"><path d="M4 14h6" stroke="#fff" strokeWidth="3" /></svg></WindowButton>
          <WindowButton aria-label="Restore"><svg width="18" height="19"><path d="M7.500 8.500h6v6h-6zM5 11.500V5.500h6" fill="none" stroke="#fff" strokeWidth="1.500" /></svg></WindowButton>
          <WindowButton $close aria-label="Close"><svg width="18" height="19"><path d="M4.500 5l9 9M13.500 5l-9 9" stroke="#fff" strokeWidth="2" /></svg></WindowButton>
        </WindowButtons>
      </TitleBar>

      <Band $h={23} $pad={10}>
        <Menu>{menu.map(m => <MenuItem key={m}>{m}</MenuItem>)}</Menu>
        <Brand><Flag size={19} /></Brand>
      </Band>

      <Band $h={40} $pad={9}>
        <Tool $w={24} aria-label="Forward"><Round green /></Tool>
        <Tool $w={28} $ms={3}>الخلف</Tool>
        <Caret ms={7} />
        <Tool $w={24} $ms={12} aria-label="Back"><Round /></Tool>
        <Caret ms={8} faint />
        <Tool $w={20} $ms={9} aria-label="Stop"><Doc kind="stop" /></Tool>
        <Tool $w={20} $ms={12} aria-label="Refresh"><Doc kind="refresh" /></Tool>
        <Tool $w={24} $ms={11} aria-label="Home"><Home /></Tool>
        <Rule $ms={5} $h={34} />
        <Tool $w={24} $ms={7} aria-label="Search"><Lens /></Tool>
        <Tool $w={22} $ms={1}>بحث</Tool>
        <Tool $w={26} $ms={9} aria-label="Favorites"><Star /></Tool>
        <Tool $w={34} $ms={2}>المفضلة</Tool>
        <Tool $w={24} $ms={12} aria-label="History"><HistoryIcon /></Tool>
        <Rule $ms={5} $h={34} />
        <Tool $w={22} $ms={8} aria-label="Mail"><MailIcon /></Tool>
        <Caret ms={2} />
        <Tool $w={24} $ms={7} aria-label="Print"><Printer /></Tool>
        <Tool $w={16} $ms={16} aria-label="Edit"><WordDoc /></Tool>
        <Caret ms={12} />
        <Tool $w={22} $ms={9} aria-label="Note"><Note /></Tool>
        <Tool $w={24} $ms={9} aria-label="OneNote"><OneNote /></Tool>
        <Tool $w={24} $ms={8} aria-label="Chat"><ChatIcon /></Tool>
        <Tool $w={22} $ms={7} aria-label="Research"><Research /></Tool>
        <Tool $w={24} $ms={12} aria-label="Messenger"><People /></Tool>
      </Band>

      <Band $h={24} $pad={6}>
        <Muted as="label" htmlFor="address">عنوان</Muted>
        <Combo $ms={4} $h={22}>
          <Explorer size={18} />
          <ComboInput id="address" $ltr defaultValue="http://www.obaidalamri.com/cp/" />
          <DropButton $w={16} aria-label="Addresses"><Chevron /></DropButton>
        </Combo>
        <GoButton>
          <svg width="18" height="18"><rect width="18" height="18" rx="2" fill="#2f9438" /><path d="M15 9H5M9 4.500L4.500 9 9 13.500" fill="none" stroke="#fff" strokeWidth="2" /></svg>
          انتقال
        </GoButton>
      </Band>

      <Band $h={25} $pad={5}>
        <Tool $w={20} aria-label="Toolbar menu"><Monkey /></Tool>
        <Caret ms={2} />
        <Rule $ms={5} />
        <Combo $w={222} $ms={4}>
          <ComboInput aria-label="Search terms" defaultValue="منبر علماء اليمن" />
          <DropButton $w={16} aria-label="Recent searches"><Chevron /></DropButton>
        </Combo>
        <Tool $w={10} $ms={3} aria-label="Resize"><Splitter /></Tool>
        <Tool $w={34} $ms={8}>Search</Tool>
        <Caret ms={12} />
        <Rule $ms={6} />
        <Tool $w={42} $ms={5} aria-label="Smileys"><Smiley /></Tool>
        <Caret ms={6} />
        <Tool $w={46} $ms={6} aria-label="Eyes"><Eyes /></Tool>
        <Caret ms={3} />
        <Tool $w={24} $ms={8} aria-label="Games"><Gauntlet /></Tool>
        <Caret ms={4} />
        <Rule $ms={5} />
        <Tool $w={102} $ms={5} aria-label="Trade"><TradeBanner /></Tool>
        <Rule $ms={7} />
        <Tool $w={18} $ms={4} aria-label="Highlight"><Pencil /></Tool>
        <Tool $w={18} $ms={19} aria-label="Find"><Finder /></Tool>
        <Tool $w={24} $ms={2}>منبر</Tool>
        <Tool $w={18} $ms={6} aria-label="Find"><Finder /></Tool>
        <Tool $w={28} $ms={2}>علماء</Tool>
        <Tool $w={18} $ms={8} aria-label="Find"><Finder /></Tool>
        <Tool $w={28} $ms={2}>اليمن</Tool>
        <Spring />
        <Rule />
        <Tool $w={30} $ms={3}><Muted $size={11}>Links</Muted></Tool>
        <Tool $w={16} aria-label="More links"><Chevrons>«</Chevrons></Tool>
      </Band>

      <Band $h={25} $pad={47}>
        <Caret />
        <SunkenInput aria-label="Web search" />
        <SearchWeb>Search Web</SearchWeb>
        <Tool $w={130} $ms={32}>Upgrade your Toolbar Now</Tool>
        <Caret ms={8} />
        <Tool $w={22} $ms={38}>Mail</Tool>
        <Caret ms={7} />
        <Tool $w={24} $ms={21}>Help</Tool>
        <Caret ms={9} />
      </Band>

      <Band $h={24} $pad={0} />

      <Band $h={29} $pad={4}>
        <Tool $w={68} aria-label="4shared"><FourLogo /></Tool>
        <Caret ms={6} />
        <Combo $w={200} $ms={4}>
          <Tool as="span" $w={14} $ms={4}><Lens size={14} /></Tool>
          <Caret />
          <ComboInput aria-label="Search 4shared" $ltr />
          <DropButton $w={19} aria-label="Recent"><Chevron /></DropButton>
        </Combo>
        <Tool $w={18} $ms={1} aria-label="Go"><Tile kind="back" /></Tool>
        <Tool $w={34} $ms={6}>Search</Tool>
        <Tool $w={10} $ms={8} aria-label="Resize"><Splitter /></Tool>
        <Tool $w={20} $ms={2} aria-label="Games"><Tile kind="games" w={20} /></Tool>
        <Tool $w={58} $ms={5}>Free Games</Tool>
        <Tool $w={18} $ms={9} aria-label="Desktop"><Tile kind="four" /></Tool>
        <Tool $w={82} $ms={5}>Σshared Desktop</Tool>
        <Tool $w={20} $ms={10} aria-label="Access"><Tile kind="access" w={20} /></Tool>
        <Tool $w={76} $ms={6}>ΣShared Access</Tool>
        <Tool $w={22} $ms={10} aria-label="TV"><Tile kind="tv" w={22} /></Tool>
        <Tool $w={13} $ms={6}>TV</Tool>
        <Caret ms={7} />
        <Tool $w={24} $ms={4} aria-label="Music"><Tile kind="music" w={24} /></Tool>
        <Tool $w={27} $ms={7}>Music</Tool>
        <Tool $w={16} $ms={10} aria-label="Facebook"><Tile kind="face" w={16} /></Tool>
        <Tool $w={22} $ms={6} aria-label="Twitter"><Tile kind="bird" w={22} /></Tool>
        <Tool $w={16} $ms={3} aria-label="MySpace"><Tile kind="crowd" w={16} /></Tool>
        <Tool $w={30} $ms={5} aria-label="YouTube"><YouTube /></Tool>
        <Tool $w={22} $ms={3} aria-label="Arcade"><Tile kind="stick" w={22} /></Tool>
        <Tool $w={33} $ms={5}>Games</Tool>
        <Caret ms={7} />
        <Spring />
        <Tool $w={16} aria-label="More"><Chevrons>«</Chevrons></Tool>
        <Rule $ms={4} />
        <Tool $w={28} $ms={9} aria-label="Add">
          <svg width="16" height="16"><rect x=".5" y=".5" width="15" height="15" rx="2" fill="#f8fafc" stroke="#b4bcc4" /><path d="M8 4v8M4 8h8" stroke="#667" strokeWidth="2" /></svg>
        </Tool>
      </Band>

      <Frames>
        <VBar>
          <ScrollButton aria-label="Up"><Tri dir="up" /></ScrollButton>
          <Thumb $grow={453} />
          <Track $grow={103} />
          <ScrollButton aria-label="Down"><Tri dir="down" /></ScrollButton>
        </VBar>
        <Sidebar>
          <LogoLink href="#" aria-label="Infinity"><InfinityLogo /></LogoLink>
          <SideList>
            {sections.map(s => (
              <li key={s}><SideLink href="#">{s}<Tri dir="left" color="#f28c00" /></SideLink></li>
            ))}
          </SideList>
        </Sidebar>
        <MainFrame>
          <MainRow>
            <VBar $top={2}>
              <ScrollButton aria-label="Up"><Tri dir="up" /></ScrollButton>
              <Thumb $grow={468} />
              <Track $grow={67} />
              <ScrollButton aria-label="Down"><Tri dir="down" /></ScrollButton>
            </VBar>
            <Page>
              <PageTitle>تعديل محتوى في مقالات</PageTitle>
              <Sheet>
                <FormTable>
                  <tbody>
                    <Row id="section" label="القسم" h={26}><FieldInput id="section" /></Row>
                    <Row id="title" label="العنوان" h={28}><FieldInput id="title" /></Row>
                    <Row id="writer" label="الكاتب" h={28}><FieldInput id="writer" /></Row>
                    <Row id="photo" label="صورة الكاتب" h={26}><FieldInput id="photo" /></Row>
                    <Row id="color" label="لوحة التنسيق" h={68}>
                      <Pickers>
                        <Picker w={54} text="لـون" id="color" />
                        <Picker w={51} text="حجم" label="حجم" />
                        <Picker w={132} text="خط" label="خط" />
                      </Pickers>
                      <EditorBar>
                        {editorTools.map(t => <EditorButton key={t.name} $w={t.w} aria-label={t.name}>{t.art}</EditorButton>)}
                      </EditorBar>
                      <Hint>يرجى تضليل العبارة المطلوب تنسيقها ثم اختيار الأداة المطلوب استخدامها للتنسيق وللتراجع يمكن الضغط على CTRL+Z</Hint>
                    </Row>
                    <Row id="audio" label="الخلفية الصوتية" h={26}>
                      <Inline><Picker w={64} text="- - - - -" id="audio" />سيتم تشغيل ملف الصوت تلقائيا</Inline>
                    </Row>
                    <Row id="backdrop" label="صورة الخلفية" h={26}>
                      <Inline><Picker w={64} text="- - - - -" id="backdrop" />قائمة الخلفيات</Inline>
                    </Row>
                    <Row id="content" label="المحتوى" h={247}>
                      <EditorArea>
                        <Content id="content" />
                        <EditorScroll>
                          <ScrollButton aria-label="Up"><Tri dir="up" color="#0a5a58" /></ScrollButton>
                          <Track $grow={1} />
                          <ScrollButton aria-label="Down"><Tri dir="down" color="#0a5a58" /></ScrollButton>
                        </EditorScroll>
                      </EditorArea>
                    </Row>
                    <Row id="comments" label="السماح بالتعليق" h={26}>
                      <Picker w={50} text="نعم" id="comments" start />
                    </Row>
                    <Row id="extra" label="" h={26}>
                      <Picker w={50} text="نعم" id="extra" start />
                    </Row>
                  </tbody>
                </FormTable>
                <Callout />
                <Annotation>
                  كيف أفعلُ هذا الخيار
                  <svg width="216" height="24" viewBox="0 0 216 24"><path d="M0 1h54l16 7 83 1V1l63 11-63 11v-8l-83 0-16 7L0 23l29-11z" /></svg>
                </Annotation>
              </Sheet>
            </Page>
          </MainRow>
          <HBar>
            <ScrollButton aria-label="Right"><Tri dir="right" /></ScrollButton>
            <Track $grow={12} />
            <Thumb $grow={904} />
            <ScrollButton aria-label="Left"><Tri dir="left" /></ScrollButton>
          </HBar>
        </MainFrame>
      </Frames>

      <StatusBar>
        <Explorer size={17} />
        <Spring />
        {[24, 24, 24, 24, 24].map((w, i) => <StatusCell key={i} $w={w} />)}
        <StatusCell $w={130}><Globe />Internet</StatusCell>
        <StatusCell $w={19} />
      </StatusBar>

      <TaskBar>
        <StartButton><Flag size={20} />ابدأ</StartButton>
        <Tasks>
          <Task><TaskArt kind="fox" /><Count>٢</Count><TaskText $size={11}>Firefox</TaskText><Spring /><Tri dir="down" /></Task>
          <Task $active><Explorer page={false} /><Count>٥</Count><TaskText $size={11}>Internet Explorer</TaskText><Spring /><Tri dir="down" /></Task>
          <Task><TaskArt kind="tools" /><TaskText $size={11}>محرر الصوتيات - النس...</TaskText></Task>
          <Task><TaskArt kind="folder" /><TaskText $ltr $size={11}>٣dicon</TaskText></Task>
          <Task><TaskArt kind="brush" /><TaskText $ltr $size={11}>...] - Adobe Photoshop</TaskText></Task>
          <Task><TaskArt kind="swap" /><TaskText $size={11}>محول الصوتيات</TaskText></Task>
        </Tasks>
        <Language>AR</Language>
        <Tray>
          <svg width="18" height="18"><circle cx="9" cy="9" r="8" fill="#3aa4f4" stroke="#bfe2ff" /><path d="M7 5l4 4-4 4" fill="none" stroke="#fff" strokeWidth="2" /></svg>
          <TaskArt kind="buddies" />
          <TaskArt kind="net" />
          <Clock>٠٣:١٦ ص</Clock>
        </Tray>
      </TaskBar>

      <Gadget $top={741} $right={45} aria-label="Quick view">
        <svg width="38" height="38" opacity=".7"><circle cx="19" cy="18" r="13" fill="#dfe6f2" stroke="#c2ccdf" /><circle cx="19" cy="18" r="8.500" fill="#5f7fc0" /><circle cx="20" cy="19" r="4" fill="#fff" /><path d="M22 28l11 6-5-10z" fill="#d4dcea" /></svg>
      </Gadget>
      <Gadget $top={785} $right={40} aria-label="Download">
        <svg width="38" height="38"><rect x="4" y="4" width="30" height="30" fill="#5e94b4" stroke="#1c5ca4" strokeWidth="2" /><path d="M15 11h8v8h6L19 29 9 19h6z" fill="#c4dcea" /></svg>
      </Gadget>
    </Desktop>
  );
}
